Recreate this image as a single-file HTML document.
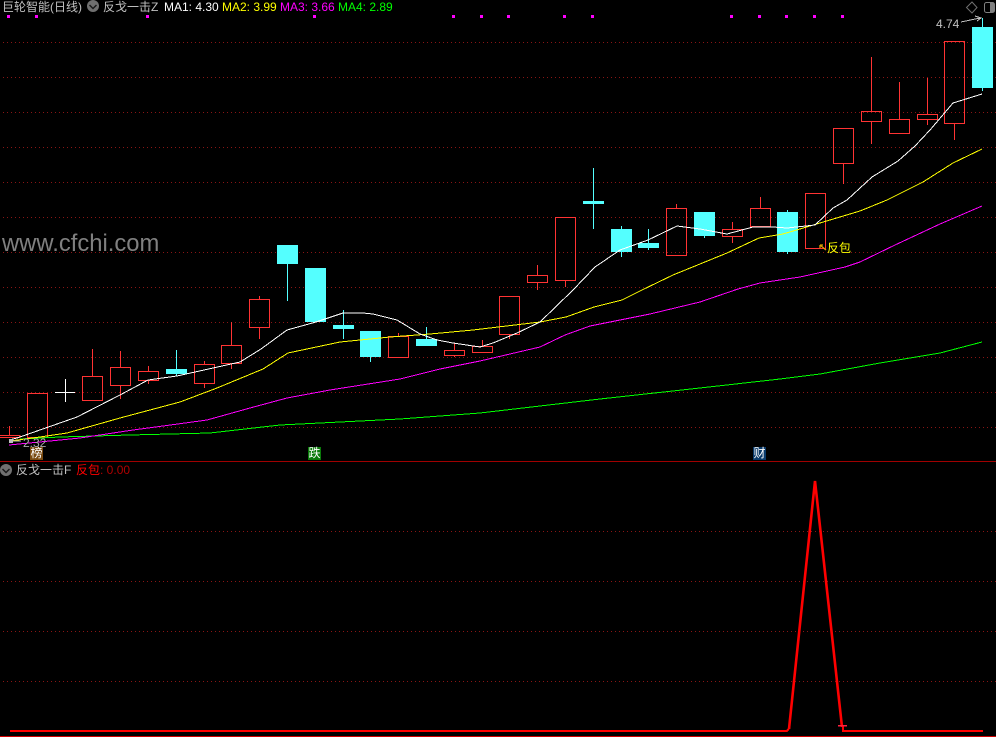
<!DOCTYPE html>
<html><head><meta charset="utf-8"><style>
html,body{margin:0;padding:0;background:#000;width:996px;height:737px;overflow:hidden}
svg{display:block;position:absolute;left:0;top:0}
.t{position:absolute;white-space:pre;font:12px/14px "Liberation Sans","WenQuanYi Zen Hei",sans-serif;color:#c0c0c0}
.c{position:absolute;width:13px;height:13px;color:#fff;font:12px/13px "WenQuanYi Zen Hei",sans-serif;text-align:center}
</style></head><body>
<svg width="996" height="737" viewBox="0 0 996 737">
<g stroke="#8a1515" stroke-dasharray="1 3" fill="none" shape-rendering="crispEdges">
<path d="M3 42.5H996M3 77.5H996M3 112.5H996M3 147.5H996M3 182.5H996M3 217.5H996M3 252.5H996M3 287.5H996M3 322.5H996M3 357.5H996M3 392.5H996M3 427.5H996M3 531.5H996M3 581.5H996M3 631.5H996M3 681.5H996"/>
</g>
<text x="2" y="251" font-family="Liberation Sans" font-size="23.8" fill="#808080">www.cfchi.com</text>
<g fill="#ff00ff" shape-rendering="crispEdges">
<rect x="7" y="15" width="3" height="3"/><rect x="35" y="15" width="3" height="3"/><rect x="146" y="15" width="3" height="3"/><rect x="313" y="15" width="3" height="3"/><rect x="452" y="15" width="3" height="3"/><rect x="480" y="15" width="3" height="3"/><rect x="507" y="15" width="3" height="3"/><rect x="563" y="15" width="3" height="3"/><rect x="591" y="15" width="3" height="3"/><rect x="730" y="15" width="3" height="3"/><rect x="758" y="15" width="3" height="3"/><rect x="785" y="15" width="3" height="3"/><rect x="813" y="15" width="3" height="3"/><rect x="841" y="15" width="3" height="3"/>
</g>
<g fill="none" stroke="#ff3333" shape-rendering="crispEdges">
<path d="M9.5 426V435M0 435.5H20V437.5H0"/>
<rect x="27.5" y="393.5" width="20" height="44"/>
<rect x="82.5" y="376.5" width="20" height="24"/><path d="M92.5 349V376"/>
<rect x="110.5" y="367.5" width="20" height="18"/><path d="M120.5 351V367M120.5 386V399"/>
<rect x="138.5" y="371.5" width="20" height="9"/><path d="M148.5 366V371M148.5 381V384"/>
<rect x="194.5" y="364.5" width="20" height="19"/><path d="M204.5 361V364M204.5 384V388"/>
<rect x="221.5" y="345.5" width="20" height="18"/><path d="M231.5 322V345M231.5 364V369"/>
<rect x="249.5" y="299.5" width="20" height="28"/><path d="M259.5 296V299M259.5 328V339"/>
<rect x="388.5" y="336.5" width="20" height="21"/><path d="M398.5 333V336"/>
<rect x="444.5" y="350.5" width="20" height="5"/><path d="M454.5 343V350M454.5 356V357"/>
<rect x="472.5" y="346.5" width="20" height="6"/><path d="M482.5 340V346"/>
<rect x="499.5" y="296.5" width="20" height="38"/><path d="M509.5 335V339"/>
<rect x="527.5" y="275.5" width="20" height="7"/><path d="M537.5 265V275M537.5 283V290"/>
<rect x="555.5" y="217.5" width="20" height="63"/><path d="M565.5 281V287"/>
<rect x="666.5" y="208.5" width="20" height="47"/><path d="M676.5 204V208"/>
<rect x="722.5" y="229.5" width="20" height="7"/><path d="M732.5 222V229M732.5 237V243"/>
<rect x="750.5" y="208.5" width="20" height="18"/><path d="M760.5 197V208"/>
<rect x="805.5" y="193.5" width="20" height="55"/>
<rect x="833.5" y="128.5" width="20" height="35"/><path d="M843.5 164V184"/>
<rect x="861.5" y="111.5" width="20" height="10"/><path d="M871.5 57V111M871.5 122V144"/>
<rect x="889.5" y="119.5" width="20" height="14"/><path d="M899.5 82V119"/>
<rect x="917.5" y="114.5" width="20" height="5"/><path d="M927.5 78V114M927.5 120V125"/>
<rect x="944.5" y="41.5" width="20" height="82"/><path d="M954.5 124V140"/>
</g>
<path d="M55 392.5H75M65.5 379V402" stroke="#fff" fill="none" shape-rendering="crispEdges"/>
<g fill="#54ffff" shape-rendering="crispEdges">
<rect x="166" y="369" width="21" height="5"/><rect x="176" y="350" width="1" height="26"/>
<rect x="277" y="245" width="21" height="19"/><rect x="287" y="264" width="1" height="37"/>
<rect x="305" y="268" width="21" height="54"/>
<rect x="333" y="325" width="21" height="4"/><rect x="343" y="310" width="1" height="29"/>
<rect x="360" y="331" width="21" height="26"/><rect x="370" y="357" width="1" height="5"/>
<rect x="416" y="339" width="21" height="7"/><rect x="426" y="327" width="1" height="12"/>
<rect x="583" y="201" width="21" height="3"/><rect x="593" y="168" width="1" height="61"/>
<rect x="611" y="229" width="21" height="23"/><rect x="621" y="226" width="1" height="31"/>
<rect x="638" y="243" width="21" height="5"/><rect x="648" y="229" width="1" height="21"/>
<rect x="694" y="212" width="21" height="24"/><rect x="704" y="236" width="1" height="2"/>
<rect x="777" y="212" width="21" height="40"/><rect x="787" y="210" width="1" height="44"/>
<rect x="972" y="27" width="21" height="61"/><rect x="982" y="18" width="1" height="73"/>
</g>
<g fill="none" stroke-width="1" shape-rendering="crispEdges">
<polyline stroke="#00ff00" points="20,439 60,437 130,435 210,433 280,425 400,419 480,413 540,406 600,399 700,388 780,379 820,374 880,363 940,353 982,342"/>
<polyline stroke="#ff00ff" points="9,445 60,440 80,438 133,430 163,426 207,420 250,408 287,398 330,390 400,379 440,369 480,361 540,347 565,335 590,326 650,314 700,302 738,289 760,283 800,277 845,267 860,262 895,245 940,224 982,206"/>
<polyline stroke="#ffff00" points="10,441 40,437 67,433 120,418 180,402 217,388 263,369 288,353 340,342 390,337 430,334 473,330 540,322 566,317 594,307 622,300 642,290 673,275 727,253 759,238 783,234 810,226 840,217 860,211 887,200 923,182 953,163 982,149"/>
<polyline stroke="#ffffff" points="9,440 17,438 77,417 120,395 148,380 177,376 213,368 240,362 261,349 287,330 316,322 343,313 363,313 373,314 397,320 420,334 437,340 453,343 480,347 493,343 517,333 540,322 573,290 595,267 620,250 648,240 677,226 700,229 727,234 753,227 773,227 787,228 815,225 833,208 847,200 872,177 898,161 915,146 930,130 953,103 982,94"/>
</g>
<g fill="none" stroke="#c0c0c0" shape-rendering="crispEdges">
<path d="M961 22L980 18M975 16L981 18L977 21"/>
<path d="M21 441L10 441"/>
</g>
<rect x="9" y="439" width="4" height="4" fill="#c0c0c0"/>
<path d="M820 245L826 250M820 245V248M820 245H823" stroke="#e0a000" fill="none" stroke-width="1.3"/>
<path d="M0 461.5H996" stroke="#a00000" shape-rendering="crispEdges"/>
<path d="M0 736.5H996" stroke="#d00000" shape-rendering="crispEdges"/>
<polyline fill="none" stroke="#ff0000" stroke-width="2" shape-rendering="crispEdges" points="10,731 787,731 790,727"/>
<polyline fill="none" stroke="#ff0000" stroke-width="2.6" points="789,729 815,481 842,727"/>
<polyline fill="none" stroke="#ff0000" stroke-width="2" shape-rendering="crispEdges" points="843,726 843,731 983,731"/>
<path d="M838 725.5H847" stroke="#ff2040" stroke-width="1.5" shape-rendering="crispEdges"/>
<circle cx="93" cy="6" r="6" fill="#707070"/><path d="M89.5 5L93 8.500L96.500 5" stroke="#1a1a1a" stroke-width="1.500" fill="none"/>
<circle cx="6" cy="470" r="6" fill="#707070"/><path d="M2.500 469L6 472.500L9.500 469" stroke="#1a1a1a" stroke-width="1.500" fill="none"/>
<path d="M972 2L977 7.500L972 13L966.500 7.500Z" fill="none" stroke="#707070"/>
<rect x="984.500" y="2.500" width="10" height="10" rx="2" fill="none" stroke="#808080"/><rect x="990" y="3" width="4" height="9" fill="#808080"/>
</svg>
<div class="t" style="left:2px;top:0">巨轮智能(日线)</div>
<div class="t" style="left:103px;top:0">反戈一击Z</div>
<div class="t" style="left:164px;top:0;color:#fff">MA1: 4.30</div>
<div class="t" style="left:222px;top:0;color:#ff0">MA2: 3.99</div>
<div class="t" style="left:280px;top:0;color:#f0f">MA3: 3.66</div>
<div class="t" style="left:338px;top:0;color:#0f0">MA4: 2.89</div>
<div class="t" style="left:936px;top:17px">4.74</div>
<div class="t" style="left:23px;top:436px;color:#a8a8a8">2.32</div>
<div class="t" style="left:827px;top:241px;color:#ff0">反包</div>
<div class="c" style="left:30px;top:447px;background:#7a4a10">榜</div>
<div class="c" style="left:308px;top:447px;background:#0a7a0a">跌</div>
<div class="c" style="left:753px;top:447px;background:#0a3a6a">财</div>
<div class="t" style="left:16px;top:463px">反戈一击F</div>
<div class="t" style="left:76px;top:463px;color:#f00">反包<span style="color:#b00000">: 0.00</span></div>
</body></html>
